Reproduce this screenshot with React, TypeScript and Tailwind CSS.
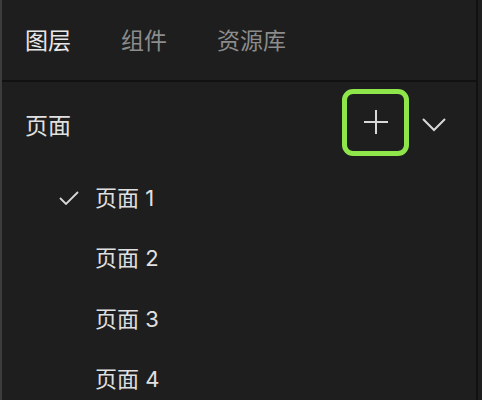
import React from 'react';

const pages = ['页面 1', '页面 2', '页面 3', '页面 4'];

export default function App() {
  return (
    <div
      className="w-[482px] h-[400px] overflow-hidden bg-[#1e1e1e] flex"
      style={{ fontFamily: "Inter, 'Noto Sans CJK SC', sans-serif" }}
    >
      <div className="w-[2px] shrink-0 bg-[#3c3c3c]" />
      <div className="flex-1 flex flex-col border-r-2 border-[#111111]">
        <div className="h-[82px] shrink-0 flex items-center gap-[50px] pl-[23px] pt-[2px] text-[23px] border-b-2 border-[#111111]">
          <span className="text-[#e8e8e8]">图层</span>
          <span className="text-[#8c8c8c]">组件</span>
          <span className="text-[#8c8c8c]">资源库</span>
        </div>
        <div className="h-[86px] shrink-0 flex items-center pl-[23px] pr-[17px]">
          <span className="text-[23px] text-[#e0e0e0] flex-1 mt-[2px]">页面</span>
          <button className="w-[67px] h-[67px] mb-[6px] rounded-[11px] border-[5px] border-[#8ee64a] flex items-center justify-center">
            <svg width="26" height="26" viewBox="0 0 26 26" stroke="#d8d8d8" strokeWidth="2">
              <path d="M13 1v24M1 13h24" />
            </svg>
          </button>
          <div className="w-[50px] flex justify-center">
            <svg width="24" height="14" viewBox="0 0 24 14" fill="none" stroke="#d8d8d8" strokeWidth="2">
              <path d="M1 1l11 11L23 1" />
            </svg>
          </div>
        </div>
        <div className="flex flex-col shrink-0">
          {pages.map((p, i) => (
            <div key={p} className="h-[60.5px] shrink-0 flex items-center">
              <div className="w-[93px] flex justify-end pr-[16px]">
                {i === 0 && (
                  <svg width="20" height="14" viewBox="0 0 20 14" fill="none" stroke="#d8d8d8" strokeWidth="1.8">
                    <path d="M1 7l6 6L19 1" />
                  </svg>
                )}
              </div>
              <span className="text-[22px] text-[#e0e0e0]">{p}</span>
            </div>
          ))}
        </div>
      </div>
      <div className="w-[4px] shrink-0" />
    </div>
  );
}
